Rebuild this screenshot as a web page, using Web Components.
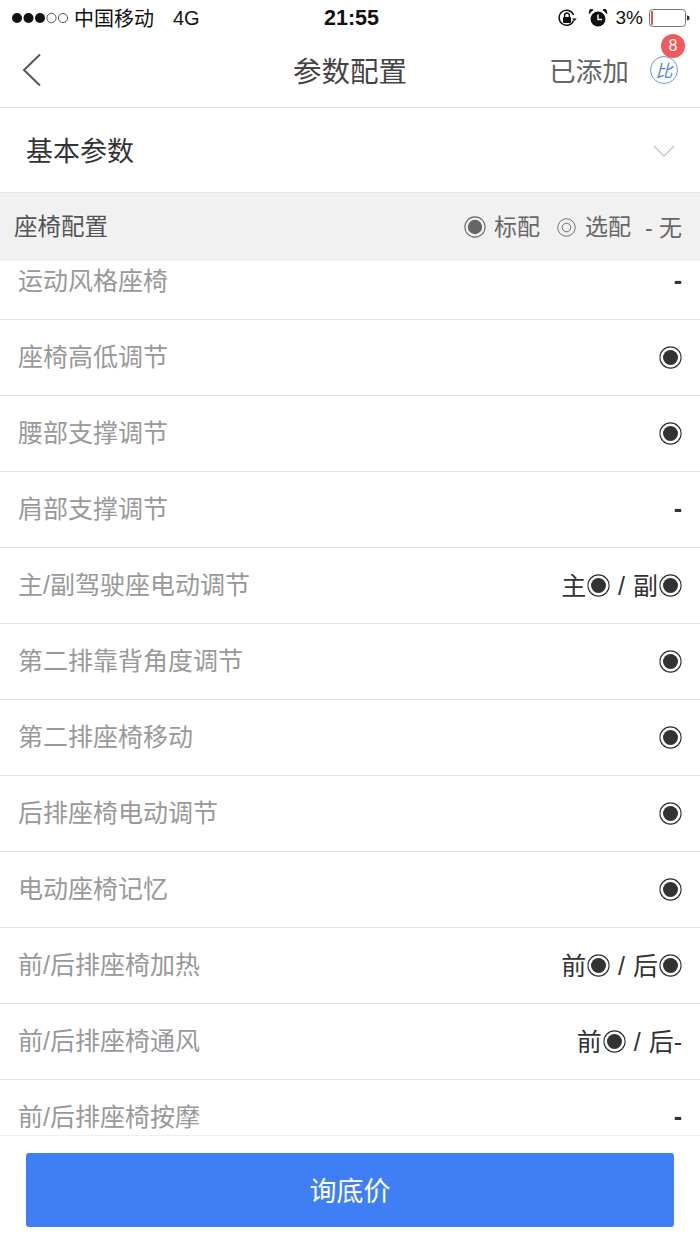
<!DOCTYPE html>
<html lang="zh">
<head>
<meta charset="utf-8">
<title>参数配置</title>
<style>
	html, body {
		margin: 0;
		padding: 0;
		height: 100%;
		background: #fff;
		font-family: 'Noto Sans CJK SC', 'Liberation Sans', sans-serif;
	}

	#page {
		display: flex;
		flex-direction: column;
		height: 1244px;
		width: 700px;
		overflow: hidden;
	}
</style>
</head>
<body>
<div id="page">
	<status-bar></status-bar>
	<nav-bar count="8"></nav-bar>
	<collapse-row>基本参数</collapse-row>
	<section-header>座椅配置</section-header>
	<param-list>
		<param-row label="运动风格座椅" value="-"></param-row>
		<param-row label="座椅高低调节" value="*"></param-row>
		<param-row label="腰部支撑调节" value="*"></param-row>
		<param-row label="肩部支撑调节" value="-"></param-row>
		<param-row label="主/副驾驶座电动调节" value="主* / 副*"></param-row>
		<param-row label="第二排靠背角度调节" value="*"></param-row>
		<param-row label="第二排座椅移动" value="*"></param-row>
		<param-row label="后排座椅电动调节" value="*"></param-row>
		<param-row label="电动座椅记忆" value="*"></param-row>
		<param-row label="前/后排座椅加热" value="前* / 后*"></param-row>
		<param-row label="前/后排座椅通风" value="前* / 后-"></param-row>
		<param-row label="前/后排座椅按摩" value="-"></param-row>
	</param-list>
	<footer-bar>询底价</footer-bar>
</div>

<script>
class StatusBar extends HTMLElement {
	constructor() {
		super();
		this.shadow_root = this.attachShadow({ mode: 'open' });
	}

	connectedCallback() {
		this.shadow_root.innerHTML = `
			<style>
			:host {
				display: grid;
				grid-template-columns: 1fr auto 1fr;
				align-items: center;
				height: 38px;
				padding: 0 8px 2px 11px;
				box-sizing: border-box;
				color: #111;
				font-family: 'Liberation Sans', 'Noto Sans CJK SC', sans-serif;
				font-size: 20px;
			}
			.left, .right {
				display: flex;
				align-items: center;
			}
			.right {
				justify-content: flex-end;
			}
			.carrier {
				font-family: 'Noto Sans CJK SC', sans-serif;
				margin-left: 2px;
				font-size: 20px;
				line-height: 24px;
			}
			.net {
				margin-left: 19px;
			}
			.time {
				font-weight: 700;
				font-size: 21.5px;
			}
			svg {
				display: block;
			}
			.pct {
				margin: 0 6px 0 8px;
				font-size: 19px;
			}
			</style>
			<div class="left">
				<svg width="61" height="12" viewBox="0 0 61 12">
					<circle cx="6" cy="6" r="5" fill="#111"/>
					<circle cx="17.5" cy="6" r="5" fill="#111"/>
					<circle cx="29" cy="6" r="5" fill="#111"/>
					<circle cx="40.5" cy="6" r="4.6" fill="none" stroke="#555" stroke-width="1"/>
					<circle cx="52" cy="6" r="4.6" fill="none" stroke="#555" stroke-width="1"/>
				</svg>
				<span class="carrier">中国移动</span>
				<span class="net">4G</span>
			</div>
			<div class="time">21:55</div>
			<div class="right">
				<svg width="20" height="20" viewBox="0 0 20 20" style="margin-right:11px">
					<path d="M16.6 12.5A7.5 7.5 0 1 1 16.6 7" fill="none" stroke="#111" stroke-width="1.5"/>
					<path d="M15 10.5l2.4 2.6 2.4-2.6z" fill="#111"/>
					<rect x="6" y="9" width="8" height="6" rx="1" fill="#111"/>
					<path d="M7.6 9V7.4a2.4 2.4 0 0 1 4.8 0V9" fill="none" stroke="#111" stroke-width="1.4"/>
				</svg>
				<svg width="20" height="20" viewBox="0 0 20 20">
					<circle cx="10" cy="11" r="7.5" fill="#111"/>
					<path d="M10 6.5V11.5H14" fill="none" stroke="#fff" stroke-width="1.4"/>
					<path d="M1 5.5L5 1.8 2.2 1.4zM19 5.5L15 1.8 17.8 1.4z" fill="#111" stroke="#111"/>
				</svg>
				<span class="pct">3%</span>
				<svg width="42" height="18" viewBox="0 0 42 18" style="margin-right:1px">
					<rect x="0.5" y="0.5" width="36" height="17" rx="3" fill="none" stroke="#777"/>
					<rect x="2" y="2" width="2" height="14" fill="#e0564f"/>
					<path d="M38 6.5c2 0 2.5 1 2.5 2.5s-.5 2.5-2.5 2.5z" fill="#333"/>
				</svg>
			</div>
		`;
	}
}

class NavBar extends HTMLElement {
	constructor() {
		super();
		this.shadow_root = this.attachShadow({ mode: 'open' });
	}

	connectedCallback() {
		this.shadow_root.innerHTML = `
			<style>
			:host {
				display: grid;
				grid-template-columns: 1fr auto 1fr;
				align-items: center;
				height: 70px;
				padding: 0 22px 6px 22px;
				box-sizing: border-box;
				border-bottom: solid 1px #e4e4e4;
				color: #444;
			}
			.title {
				font-size: 28.5px;
				line-height: 40px;
			}
			.back {
				display: block;
			}
			.right {
				display: flex;
				justify-content: flex-end;
				align-items: center;
			}
			.added {
				font-size: 26.7px;
				line-height: 40px;
				color: #666;
				margin-right: 21px;
			}
			.compare {
				position: relative;
				width: 28px;
				height: 28px;
				margin-top: 1px;
				border: solid 1.5px #6f9bd6;
				border-radius: 50%;
				box-sizing: border-box;
				color: #4f86cf;
				font-size: 17px;
				line-height: 25px;
				text-align: center;
				font-style: italic;
			}
			.badge {
				position: absolute;
				top: -23px;
				left: 10px;
				width: 24px;
				height: 24px;
				border-radius: 50%;
				background: #ef5a5c;
				color: #fff;
				font-family: 'Liberation Sans', sans-serif;
				font-size: 16px;
				font-style: normal;
				line-height: 24px;
			}
			</style>
			<svg class="back" width="20" height="34" viewBox="0 0 20 34">
				<path d="M18 1.5L2 17l16 15.5" fill="none" stroke="#555" stroke-width="2"/>
			</svg>
			<div class="title">参数配置</div>
			<div class="right">
				<span class="added">已添加</span>
				<span class="compare">比<span class="badge">${this.getAttribute('count')}</span></span>
			</div>
		`;
	}
}

class CollapseRow extends HTMLElement {
	constructor() {
		super();
		this.shadow_root = this.attachShadow({ mode: 'open' });
	}

	connectedCallback() {
		this.shadow_root.innerHTML = `
			<style>
			:host {
				display: flex;
				justify-content: space-between;
				align-items: center;
				height: 85px;
				padding: 0 25px 2px 26px;
				box-sizing: border-box;
				border-bottom: solid 1px #e6e6e6;
				color: #333;
				font-size: 27px;
			}
			svg {
				display: block;
				margin-top: 4px;
			}
			</style>
			<slot></slot>
			<svg width="22" height="12" viewBox="0 0 22 12">
				<path d="M1 1l10 10L21 1" fill="none" stroke="#c4c4c4" stroke-width="1.3"/>
			</svg>
		`;
	}
}

class ConfigDot extends HTMLElement {
	constructor() {
		super();
		this.shadow_root = this.attachShadow({ mode: 'open' });
	}

	connectedCallback() {
		const kind = this.getAttribute('kind') || 'on';
		const size = Number(this.getAttribute('size') || 23);
		const color = this.getAttribute('color') || '#333';
		const inner = kind === 'on'
			? `<circle cx="11.5" cy="11.5" r="7.5" fill="${color}"/>`
			: `<circle cx="11.5" cy="11.5" r="5.2" fill="none" stroke="${color}" stroke-width="1.1"/>`;
		this.shadow_root.innerHTML = `
			<style>
			:host {
				display: inline-block;
				flex: none;
				width: ${size}px;
				height: ${size}px;
			}
			svg {
				display: block;
			}
			</style>
			<svg width="${size}" height="${size}" viewBox="0 0 23 23">
				<circle cx="11.5" cy="11.5" r="10.6" fill="none" stroke="${color}" stroke-width="1.1"/>
				${inner}
			</svg>
		`;
	}
}

class SectionHeader extends HTMLElement {
	constructor() {
		super();
		this.shadow_root = this.attachShadow({ mode: 'open' });
	}

	connectedCallback() {
		this.shadow_root.innerHTML = `
			<style>
			:host {
				position: relative;
				z-index: 1;
				display: flex;
				justify-content: space-between;
				align-items: center;
				height: 68px;
				padding: 0 18px 0 14px;
				box-sizing: border-box;
				background: #f1f1f1;
				color: #555;
				font-size: 23.5px;
			}
			.legend {
				display: flex;
				align-items: center;
				color: #666;
				font-size: 23px;
			}
			.label {
				margin-bottom: 4px;
			}
			config-dot {
				margin-right: 8px;
			}
			config-dot.opt {
				margin-right: 9px;
			}
			.gap {
				margin-right: 17px;
			}
			.gap.last {
				margin-right: 14px;
			}
			.none {
				font-family: 'Liberation Sans', 'Noto Sans CJK SC', sans-serif;
				margin-bottom: 2px;
			}
			</style>
			<span class="label"><slot></slot></span>
			<div class="legend">
				<config-dot kind="on" size="22" color="#666"></config-dot>
				<span class="gap label">标配</span>
				<config-dot class="opt" kind="opt" size="19" color="#666"></config-dot>
				<span class="gap last label">选配</span>
				<span class="none">- 无</span>
			</div>
		`;
	}
}

class ParamList extends HTMLElement {
	constructor() {
		super();
		this.shadow_root = this.attachShadow({ mode: 'open' });
	}

	connectedCallback() {
		// list is scrolled a little, the first row sits under the section header
		this.shadow_root.innerHTML = `
			<style>
			:host {
				display: block;
				flex: 1;
				min-height: 0;
				overflow: hidden;
			}
			.inner {
				margin-top: -17px;
			}
			</style>
			<div class="inner"><slot></slot></div>
		`;
	}
}

class ParamRow extends HTMLElement {
	constructor() {
		super();
		this.shadow_root = this.attachShadow({ mode: 'open' });
	}

	connectedCallback() {
		// * in the value stands for the filled dot
		const value = (this.getAttribute('value') || '')
			.split('*')
			.map((part) => `<span class="${part === '-' ? 'dash' : ''}">${part}</span>`)
			.join('<config-dot kind="on"></config-dot>');
		this.shadow_root.innerHTML = `
			<style>
			:host {
				display: flex;
				justify-content: space-between;
				align-items: center;
				height: 76px;
				padding: 0 18px;
				box-sizing: border-box;
				border-bottom: solid 1px #e4e4e4;
				color: #999;
				font-family: 'Liberation Sans', 'Noto Sans CJK SC', sans-serif;
				font-size: 25px;
			}
			.label {
				font-family: 'Liberation Sans', 'Noto Sans CJK SC', sans-serif;
				margin-bottom: 5px;
			}
			.value {
				display: flex;
				align-items: center;
				color: #333;
			}
			.value span {
				white-space: pre;
				word-spacing: 1px;
				margin-bottom: 3px;
			}
			.value .dash {
				font-weight: 700;
			}
			config-dot {
				margin-left: 1px;
			}
			</style>
			<span class="label">${this.getAttribute('label')}</span>
			<span class="value">${value}</span>
		`;
	}
}

class FooterBar extends HTMLElement {
	constructor() {
		super();
		this.shadow_root = this.attachShadow({ mode: 'open' });
	}

	connectedCallback() {
		this.shadow_root.innerHTML = `
			<style>
			:host {
				display: block;
				flex: none;
				height: 109px;
				padding: 17px 26px 0;
				box-sizing: border-box;
				border-top: solid 1px #efefef;
				background: #fff;
			}
			button {
				all: unset;
				display: block;
				width: 100%;
				height: 74px;
				border-radius: 3px;
				background: #3f7ff6;
				color: #fff;
				font-size: 27px;
				line-height: 66px;
				text-align: center;
			}
			</style>
			<button><slot></slot></button>
		`;
	}
}

customElements.define('status-bar', StatusBar);
customElements.define('nav-bar', NavBar);
customElements.define('collapse-row', CollapseRow);
customElements.define('config-dot', ConfigDot);
customElements.define('section-header', SectionHeader);
customElements.define('param-list', ParamList);
customElements.define('param-row', ParamRow);
customElements.define('footer-bar', FooterBar);
</script>
</body>
</html>
